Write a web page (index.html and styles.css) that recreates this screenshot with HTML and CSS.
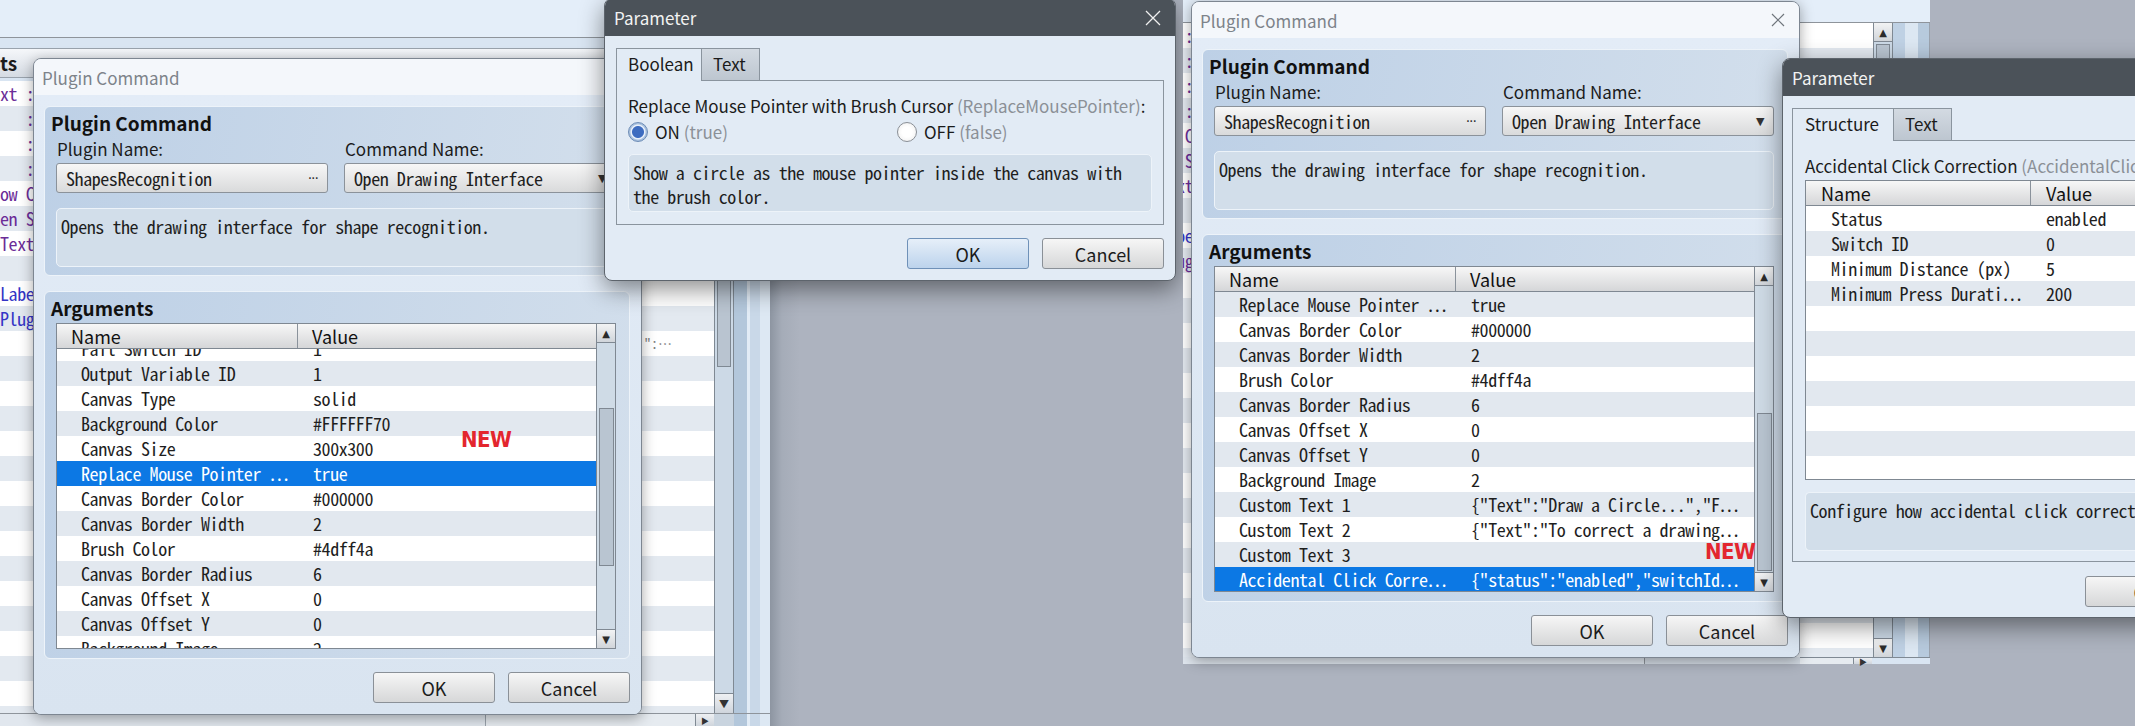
FILE: index.html
```html
<!DOCTYPE html>
<html lang="en">
<head>
<meta charset="utf-8">
<title>Plugin Command</title>
<link rel="stylesheet" href="styles.css">
</head>
<body>
<div class="screen">

<section class="shot shot-left">
  <div class="ls-app">
    <div class="app-top"></div>
    <div class="app-main">
      <div class="evlist">
        <div class="evhead">ts</div>
        <div class="evrows mono">
          <div class="evrow"><span class="purple">xt :</span></div>
          <div class="evrow"><span class="purple">   :</span></div>
          <div class="evrow"><span class="purple">   :</span></div>
          <div class="evrow"><span class="purple">   :</span></div>
          <div class="evrow"><span class="purple">ow C</span></div>
          <div class="evrow"><span class="purple">en S</span></div>
          <div class="evrow"><span class="purple">Text</span></div>
          <div class="evrow"></div>
          <div class="evrow"><span class="blue">Labe</span></div>
          <div class="evrow"><span class="blue">Plug</span></div>
          <div class="evrow"><span></span><span class="cont">":⋯</span></div>
          <div class="evrow"></div><div class="evrow"></div><div class="evrow"></div>
          <div class="evrow"></div><div class="evrow"></div><div class="evrow"></div>
          <div class="evrow"></div><div class="evrow"></div><div class="evrow"></div>
          <div class="evrow"></div><div class="evrow"></div><div class="evrow"></div>
          <div class="evrow"></div><div class="evrow"></div><div class="evrow"></div>
        </div>
      </div>
      <div class="app-vsb"><div class="app-thumb"></div><div class="app-arrow">▼</div></div>
      <div class="app-strips"></div>
    </div>
    <div class="app-status">
      <div class="st-a"></div>
      <div class="st-b"></div>
      <div class="st-arrow">▶</div>
      <div class="st-c"></div>
    </div>
  </div>
  <div class="ls-desk"></div>

  <div class="window pc-window pc-left">
    <div class="pc-title"><span>Plugin Command</span>
      <svg class="pc-close" width="14" height="14" viewBox="0 0 14 14"><path d="M1 1 L13 13 M13 1 L1 13" stroke="#70767d" stroke-width="1.2" fill="none"/></svg>
    </div>
    <div class="pc-body">
      <div class="group g-cmd">
        <div class="g-head">Plugin Command</div>
        <div class="g-fields">
          <div class="f-col">
            <div class="f-label">Plugin Name:</div>
            <div class="fbtn mono"><span>ShapesRecognition</span><span class="dots">···</span></div>
          </div>
          <div class="f-col">
            <div class="f-label">Command Name:</div>
            <div class="fbtn mono"><span>Open Drawing Interface</span><span class="tri">▼</span></div>
          </div>
        </div>
        <div class="desc mono">Opens the drawing interface for shape recognition.</div>
      </div>
      <div class="group g-args">
        <div class="g-head">Arguments</div>
        <div class="tbl">
          <div class="tbl-main">
            <div class="tbl-head"><div>Name</div><div>Value</div></div>
            <div class="tbl-body">
              <div class="tbl-rows mono scrolled">
                <div class="r w"><span>Fail Switch ID</span><span>1</span></div>
                <div class="r g"><span>Output Variable ID</span><span>1</span></div>
                <div class="r w"><span>Canvas Type</span><span>solid</span></div>
                <div class="r g"><span>Background Color</span><span>#FFFFFF70</span></div>
                <div class="r w"><span>Canvas Size</span><span>300x300</span></div>
                <div class="r sel"><span>Replace Mouse Pointer ⋯</span><span>true</span></div>
                <div class="r w"><span>Canvas Border Color</span><span>#000000</span></div>
                <div class="r g"><span>Canvas Border Width</span><span>2</span></div>
                <div class="r w"><span>Brush Color</span><span>#4dff4a</span></div>
                <div class="r g"><span>Canvas Border Radius</span><span>6</span></div>
                <div class="r w"><span>Canvas Offset X</span><span>0</span></div>
                <div class="r g"><span>Canvas Offset Y</span><span>0</span></div>
                <div class="r w"><span>Background Image</span><span>2</span></div>
              </div>
            </div>
          </div>
          <div class="vsb">
            <div class="vsb-btn">▲</div>
            <div class="vsb-thumb thumb-left"></div>
            <div class="vsb-btn down">▼</div>
          </div>
        </div>
      </div>
      <div class="btns">
        <div class="btn">OK</div>
        <div class="btn">Cancel</div>
      </div>
    </div>
    <div class="new-tag new-left">NEW</div>
  </div>

  <div class="window param-window param-left">
    <div class="pw-title"><span>Parameter</span>
      <svg class="pw-close" width="16" height="16" viewBox="0 0 16 16"><path d="M1 1 L15 15 M15 1 L1 15" stroke="#f0f0f0" stroke-width="1.3" fill="none"/></svg>
    </div>
    <div class="pw-body">
      <div class="tabs">
        <div class="tab active t-bool">Boolean</div>
        <div class="tab t-text">Text</div>
      </div>
      <div class="panel p-bool">
        <div class="p-label">Replace Mouse Pointer with Brush Cursor <span class="muted">(ReplaceMousePointer)</span>:</div>
        <div class="radios">
          <div class="radio-item"><span class="radio on"></span><span>ON <span class="muted">(true)</span></span></div>
          <div class="radio-item"><span class="radio"></span><span>OFF <span class="muted">(false)</span></span></div>
        </div>
        <div class="desc p-desc mono">Show a circle as the mouse pointer inside the canvas with the brush color.</div>
      </div>
      <div class="btns">
        <div class="btn focus">OK</div>
        <div class="btn">Cancel</div>
      </div>
    </div>
  </div>
</section>

<section class="shot shot-right">
  <div class="rs-app">
    <div class="rs-top"></div>
    <div class="rs-rows mono">
      <div class="evrow"><span class="purple shift">   :</span></div>
      <div class="evrow"><span class="purple shift">   :</span></div>
      <div class="evrow"><span class="purple shift">   :</span></div>
      <div class="evrow"><span class="purple shift">   :</span></div>
      <div class="evrow"><span class="purple shift">ow C</span></div>
      <div class="evrow"><span class="purple shift">en S</span></div>
      <div class="evrow"><span class="purple shift">Text</span></div>
      <div class="evrow"></div>
      <div class="evrow"><span class="blue shift">Labe</span></div>
      <div class="evrow"><span class="purple shift">Plug</span></div>
      <div class="evrow"></div><div class="evrow"></div><div class="evrow"></div>
      <div class="evrow"></div><div class="evrow"></div><div class="evrow"></div>
      <div class="evrow"></div><div class="evrow"></div><div class="evrow"></div>
      <div class="evrow"></div><div class="evrow"></div><div class="evrow"></div>
      <div class="evrow"></div><div class="evrow"></div><div class="evrow"></div>
      <div class="evrow"></div>
    </div>
    <div class="rs-status"><div class="rs-st-a"></div><div class="rs-st-b"></div></div>
  </div>
  <div class="rs-app2">
    <div class="rs-top"></div>
    <div class="rs2-main">
      <div class="rs2-list"></div>
      <div class="rs2-vsb"><div class="vsb-btn">▲</div><div class="rs2-thumb"></div><div class="vsb-btn down">▼</div></div>
      <div class="rs2-strips"></div>
    </div>
    <div class="rs2-h"><div class="rs2-h-fill"></div><div class="st-arrow">▶</div></div>
  </div>
  <div class="rs-desk"></div>

  <div class="window pc-window pc-right">
    <div class="pc-title"><span>Plugin Command</span>
      <svg class="pc-close" width="14" height="14" viewBox="0 0 14 14"><path d="M1 1 L13 13 M13 1 L1 13" stroke="#70767d" stroke-width="1.2" fill="none"/></svg>
    </div>
    <div class="pc-body">
      <div class="group g-cmd">
        <div class="g-head">Plugin Command</div>
        <div class="g-fields">
          <div class="f-col">
            <div class="f-label">Plugin Name:</div>
            <div class="fbtn mono"><span>ShapesRecognition</span><span class="dots">···</span></div>
          </div>
          <div class="f-col">
            <div class="f-label">Command Name:</div>
            <div class="fbtn mono"><span>Open Drawing Interface</span><span class="tri">▼</span></div>
          </div>
        </div>
        <div class="desc mono">Opens the drawing interface for shape recognition.</div>
      </div>
      <div class="group g-args">
        <div class="g-head">Arguments</div>
        <div class="tbl">
          <div class="tbl-main">
            <div class="tbl-head"><div>Name</div><div>Value</div></div>
            <div class="tbl-body">
              <div class="tbl-rows mono">
                <div class="r g"><span>Replace Mouse Pointer ⋯</span><span>true</span></div>
                <div class="r w"><span>Canvas Border Color</span><span>#000000</span></div>
                <div class="r g"><span>Canvas Border Width</span><span>2</span></div>
                <div class="r w"><span>Brush Color</span><span>#4dff4a</span></div>
                <div class="r g"><span>Canvas Border Radius</span><span>6</span></div>
                <div class="r w"><span>Canvas Offset X</span><span>0</span></div>
                <div class="r g"><span>Canvas Offset Y</span><span>0</span></div>
                <div class="r w"><span>Background Image</span><span>2</span></div>
                <div class="r g"><span>Custom Text 1</span><span>{"Text":"Draw a Circle...","F⋯</span></div>
                <div class="r w"><span>Custom Text 2</span><span>{"Text":"To correct a drawing⋯</span></div>
                <div class="r g"><span>Custom Text 3</span><span></span></div>
                <div class="r sel"><span>Accidental Click Corre⋯</span><span>{"status":"enabled","switchId⋯</span></div>
              </div>
            </div>
          </div>
          <div class="vsb">
            <div class="vsb-btn">▲</div>
            <div class="vsb-thumb thumb-right"></div>
            <div class="vsb-btn down">▼</div>
          </div>
        </div>
      </div>
      <div class="btns">
        <div class="btn">OK</div>
        <div class="btn">Cancel</div>
      </div>
    </div>
    <div class="new-tag new-right">NEW</div>
  </div>

  <div class="window param-window param-right">
    <div class="pw-title"><span>Parameter</span></div>
    <div class="pw-body">
      <div class="tabs">
        <div class="tab active t-struct">Structure</div>
        <div class="tab t-text">Text</div>
      </div>
      <div class="panel p-struct">
        <div class="p-label">Accidental Click Correction <span class="muted">(AccidentalClickCorrection)</span>:</div>
        <div class="stbl">
          <div class="tbl-head st-head"><div>Name</div><div>Value</div></div>
          <div class="tbl-rows mono">
            <div class="r sr w"><span>Status</span><span>enabled</span></div>
            <div class="r sr g"><span>Switch ID</span><span>0</span></div>
            <div class="r sr w"><span>Minimum Distance (px)</span><span>5</span></div>
            <div class="r sr g"><span>Minimum Press Durati⋯</span><span>200</span></div>
            <div class="r sr w"><span></span><span></span></div>
            <div class="r sr g"><span></span><span></span></div>
            <div class="r sr w"><span></span><span></span></div>
            <div class="r sr g"><span></span><span></span></div>
            <div class="r sr w"><span></span><span></span></div>
            <div class="r sr g"><span></span><span></span></div>
            <div class="r sr w"><span></span><span></span></div>
          </div>
        </div>
        <div class="desc s-desc mono">Configure how accidental click correction works.</div>
      </div>
      <div class="btns">
        <div class="btn">OK</div>
        <div class="btn">Cancel</div>
      </div>
    </div>
  </div>
</section>

</div>
</body>
</html>
```

FILE: styles.css
```css
* { box-sizing: border-box; margin: 0; padding: 0; }
html, body { width: 2135px; height: 726px; overflow: hidden; }
body {
  background: #adb3bf;
  font-family: "Noto Sans CJK JP", "Noto Sans", sans-serif;
  font-size: 17px;
  color: #1b1b1b;
}
.mono { font-family: "Noto Sans Mono CJK JP", "DejaVu Sans Mono", monospace; font-size: 18px; letter-spacing: -0.43px; }
.screen { position: relative; width: 2135px; height: 726px; overflow: hidden; background: #adb3bf; }

.shot { position: absolute; top: 0; height: 726px; overflow: hidden; background: #adb3bf; display: flex; }
.shot-left { left: 0; width: 1183px; }
.shot-right { left: 1183px; width: 952px; }

.ls-app { width: 770px; height: 726px; display: flex; flex-direction: column; background: #d9e5f2; flex: none; }
.app-top { height: 38px; background: #e4eef9; border-bottom: 1px solid #8e949b; flex: none; }
.app-main { flex: 1; display: flex; min-height: 0; }
.evlist { width: 714px; display: flex; flex-direction: column; padding-top: 10px; background: #d9e5f2; }
.evhead { height: 30px; flex: none; background: linear-gradient(#f5f7fa, #d5dbe3); border-top: 1px solid #9aa3ad; border-bottom: 1px solid #9aa3ad; font-weight: bold; font-size: 19px; line-height: 28px; }
.evrows { margin-top: 3px; flex: 1; overflow: hidden; }
.evrow { height: 25px; line-height: 25px; white-space: pre; display: flex; justify-content: space-between; background: #ffffff; }
.evrow:nth-child(even) { background: #e3e9f0; }
.purple { color: #6b2c97; }
.blue { color: #3434c6; }
.cont { color: #7d7d7d; padding-right: 42px; font-size: 14px; letter-spacing: 0; }
.app-vsb { width: 20px; background: #ccd9e6; border-left: 1px solid #7f8993; border-right: 1px solid #7f8993; display: flex; flex-direction: column; }
.app-thumb { height: 329px; background: #b9c4d0; border: 1px solid #7f8993; border-top: none; margin: 0 2px; }
.app-arrow { margin-top: auto; height: 20px; background: linear-gradient(#eef0f3, #cfd5dc); border-top: 1px solid #7f8993; font-size: 10px; color: #333; display: flex; align-items: center; justify-content: center; }
.app-strips { width: 36px; background: linear-gradient(90deg, #b3c7db 0 13px, #e2ecf6 13px 16px, #c9d8e8 16px 26px, #dde8f3 26px 36px); }
.app-status { height: 13px; flex: none; display: flex; background: #dfe6ee; border-top: 1px solid #8e949b; }
.st-a { width: 486px; border-right: 1px solid #9aa3ac; background: #e1e7ee; }
.st-b { width: 209px; background: #e6ebf0; }
.st-arrow { width: 19px; background: linear-gradient(#eef0f3, #cfd5dc); border-left: 1px solid #7f8993; font-size: 8px; color: #333; display: flex; align-items: center; justify-content: center; }
.st-c { flex: 1; background: linear-gradient(90deg, #c9d4df 0 20px, #b3c7db 20px 33px, #e2ecf6 33px 36px, #c9d8e8 36px 46px, #dde8f3 46px 56px); }
.ls-desk { flex: 1; background: linear-gradient(90deg, #8d95a1 0, #a5acb8 12px, #adb3bf 30px); }

.rs-app { width: 617px; height: 664px; flex: none; display: flex; flex-direction: column; background: #d9e5f2; }
.rs-top { height: 23px; flex: none; background: #e4eef9; border-bottom: 1px solid #8e949b; }
.rs-rows { flex: 1; overflow: hidden; }
.shift { margin-left: -24px; }
.rs-status { height: 7px; flex: none; display: flex; }
.rs-st-a { width: 462px; background: #dfe6ee; border-right: 1px solid #8e949b; }
.rs-st-b { flex: 1; background: #d3dbe4; }
.rs-app2 { width: 130px; height: 664px; flex: none; display: flex; flex-direction: column; background: #d9e5f2; }
.rs2-main { flex: 1; display: flex; min-height: 0; }
.rs2-list { width: 73px; background: repeating-linear-gradient(#ffffff 0 25px, #e3e9f0 25px 50px); }
.rs2-vsb { width: 20px; display: flex; flex-direction: column; background: #ccd9e6; border-left: 1px solid #7f8993; border-right: 1px solid #7f8993; }
.rs2-thumb { height: 300px; margin: 2px 2px 0; background: #b9c4d0; border: 1px solid #7f8993; }
.rs2-strips { width: 37px; background: linear-gradient(90deg, #bfd1e4 0 12px, #dce7f2 12px 25px, #b7cadd 25px 36px, #9aa2ad 36px 37px); }
.rs2-h { height: 7px; flex: none; display: flex; border-top: 1px solid #7f8993; }
.rs2-h-fill { width: 53px; background: #e6ebf0; }
.rs-desk { flex: 1; background: #adb3bf; }

.window { position: absolute; }

.pc-window {
  width: 609px; height: 657px;
  border: 1px solid #7d8691; border-radius: 8px;
  background: #dfe9f4;
  box-shadow: 0 3px 14px rgba(0, 0, 0, 0.35);
  overflow: hidden;
  display: flex; flex-direction: column;
}
.pc-left { left: 33px; top: 58px; }
.pc-right { left: 8px; top: 1px; }
.pc-title { height: 36px; flex: none; background: #f4f7fb; color: #7d838a; display: flex; align-items: center; justify-content: space-between; padding: 0 14px 0 8px; }
.pc-body { flex: 1; padding: 11px 11px 11px 10px; display: flex; flex-direction: column; background: linear-gradient(#e3ecf7, #d9e4f0); }

.group { border: 1px solid #edf3f9; border-radius: 6px; background: linear-gradient(100deg, #bdd0e6 0%, #d3dfec 100%); padding: 4px 13px 8px 11px; flex: none; }
.g-cmd { height: 170px; }
.g-args { height: 368px; margin-top: 15px; }
.g-head { height: 24px; line-height: 24px; font-weight: bold; font-size: 19px; color: #111; margin-left: -5px; }
.g-fields { display: grid; grid-template-columns: 1fr 1fr; column-gap: 16px; margin-top: 3px; }
.f-label { height: 22px; line-height: 22px; padding-left: 1px; }
.fbtn { height: 30px; margin-top: 3px; border: 1px solid #8b929a; border-radius: 3px; background: linear-gradient(#f7f7f7, #d9dadb); display: flex; align-items: center; justify-content: space-between; padding: 0 9px 0 9px; color: #1e1e1e; white-space: nowrap; }
.dots { font-family: "DejaVu Sans", sans-serif; font-size: 14px; letter-spacing: -1px; color: #333; }
.tri { font-family: "DejaVu Sans", sans-serif; font-size: 11px; color: #333; }
.desc { height: 59px; margin-top: 15px; border: 1px solid #edf3f9; border-radius: 5px; background: #d2deea; padding: 5px 4px; line-height: 24px; color: #1e1e1e; }

.tbl { height: 326px; margin-top: 3px; border: 1px solid #7f8892; display: flex; background: #fff; }
.tbl-main { flex: 1; display: flex; flex-direction: column; min-width: 0; }
.tbl-head { height: 25px; flex: none; display: grid; grid-template-columns: 241px 1fr; background: linear-gradient(#f7f7f7, #d5d6d8); border-bottom: 1px solid #7f8892; font-size: 18px; color: #111; }
.tbl-head div { padding-left: 14px; line-height: 24px; }
.tbl-head div:first-child { border-right: 1px solid #8a929b; }
.tbl-body { flex: 1; overflow: hidden; }
.tbl-rows.scrolled { margin-top: -13px; }
.r { height: 25px; display: grid; grid-template-columns: 241px 1fr; line-height: 25px; white-space: nowrap; color: #1e1e1e; }
.r span { overflow: hidden; }
.r span:first-child { padding-left: 24px; }
.r span:last-child { padding-left: 15px; }
.r.w { background: #ffffff; }
.r.g { background: #e2e8ef; }
.r.sel { background: #0c78e4; color: #ffffff; }

.vsb { width: 19px; flex: none; border-left: 1px solid #7f8892; background: #cfdbe6; display: flex; flex-direction: column; }
.vsb-btn { height: 19px; flex: none; background: linear-gradient(#f2f3f4, #d1d5da); border-bottom: 1px solid #7f8892; display: flex; align-items: center; justify-content: center; font-family: "DejaVu Sans", sans-serif; font-size: 10px; color: #2b2b2b; }
.vsb-btn.down { border-bottom: none; border-top: 1px solid #7f8892; margin-top: auto; }
.vsb-thumb { height: 158px; flex: none; margin: 0 1px 0 2px; background: #b9c5d1; border: 1px solid #7f8892; }
.thumb-left { margin-top: 65px; }
.thumb-right { margin-top: 127px; }

.btns { display: flex; justify-content: flex-end; gap: 13px; margin-top: 13px; flex: none; }
.btn { width: 122px; height: 31px; border: 1px solid #8a9097; border-radius: 3px; background: linear-gradient(#f6f6f6, #d6d7d8); font-size: 18px; color: #1b1b1b; display: flex; align-items: center; justify-content: center; }
.btn.focus { background: linear-gradient(#e6eff9, #bcd3ec); border-color: #6f91b8; }

.new-tag { position: absolute; color: #e3262e; font-family: "DejaVu Sans", sans-serif; font-stretch: condensed; font-weight: bold; font-size: 22px; letter-spacing: -0.5px; line-height: 22px; }
.new-left { left: 427px; top: 370px; }
.new-right { left: 513px; top: 539px; }

.param-window {
  width: 572px;
  border: 1px solid #5d646c; border-radius: 8px;
  background: #e2ebf5;
  box-shadow: 0 8px 24px rgba(0, 0, 0, 0.45);
  overflow: hidden;
  display: flex; flex-direction: column;
}
.param-left { left: 604px; top: -2px; height: 283px; }
.param-right { left: 599px; top: 58px; height: 560px; }
.pw-title { height: 37px; flex: none; background: #4b5259; color: #f2f2f2; display: flex; align-items: center; justify-content: space-between; padding: 0 14px 0 9px; }
.pw-body { flex: 1; padding: 12px 11px 11px 11px; display: flex; flex-direction: column; }
.param-right .pw-body { padding: 12px 11px 10px 9px; }
.param-right .btns { margin-top: 14px; }
.tabs { display: flex; height: 32px; flex: none; position: relative; z-index: 1; }
.tab { height: 32px; line-height: 30px; border: 1px solid #8a949e; border-bottom: none; padding: 0 0 0 11px; background: linear-gradient(#d3dae2, #bdc6d0); color: #1b1b1b; }
.tab.active { background: #e2ebf5; height: 33px; border-right: none; }
.t-bool { width: 85px; }
.t-struct { width: 101px; padding-left: 12px; }
.t-text { width: 59px; padding-left: 11px; }
.panel { border: 1px solid #8a949e; background: #e2ebf5; flex: none; }
.p-bool { height: 145px; padding: 14px 11px 12px 11px; }
.p-struct { height: 422px; padding: 14px 0 10px 12px; }
.p-label { height: 22px; line-height: 22px; white-space: nowrap; }
.muted { color: #8b9097; }
.radios { display: grid; grid-template-columns: 269px 1fr; height: 22px; margin-top: 2px; }
.radio-item { display: flex; align-items: center; gap: 7px; }
.radio { width: 20px; height: 20px; border-radius: 50%; border: 1px solid #8a8f96; background: radial-gradient(circle, #ffffff 0 5px, #f4f4f4 9px); flex: none; }
.radio.on { border-color: #6c8cb6; background: radial-gradient(circle, #3d6cc0 0 5.5px, #e8f0fa 6.5px 7px, #a9c1de 8px); }
.p-desc { height: 58px; margin-top: 13px; padding: 5px 4px; }
.stbl { margin-top: 3px; height: 300px; border: 1px solid #7f8892; border-right: none; background: #fff; overflow: hidden; }
.st-head { grid-template-columns: 225px 1fr; }
.st-head div { padding-left: 15px; }
.r.sr { grid-template-columns: 225px 1fr; }
.r.sr span:first-child { padding-left: 25px; }
.r.sr span:last-child { padding-left: 15px; }
.s-desc { margin-top: 12px; height: 59px; padding: 5px 4px; white-space: nowrap; overflow: hidden; border-right: none; }
```
